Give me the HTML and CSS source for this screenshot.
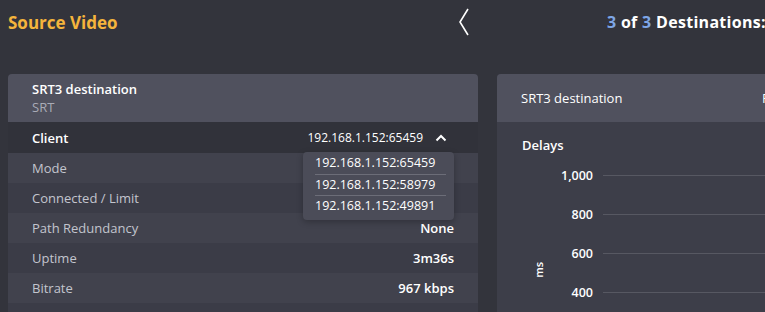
FILE: index.html
```html
<!DOCTYPE html>
<html lang="en">
<head>
  <meta charset="UTF-8" />
  <title>Source Video</title>
  <link rel="stylesheet" href="styles.css">
</head>
<body>
  <div class="topbar">
    <h1 class="title">Source Video</h1>
    <button class="back" aria-label="Back">
      <svg width="12" height="28" viewBox="0 0 12 28"><path d="M10 1 L2 14 L10 27" fill="none" stroke="#fff" stroke-width="1.6"/></svg>
    </button>
    <div class="dest-count"><span class="num">3</span> of <span class="num">3</span> Destinations:</div>
  </div>

  <div class="panels">
    <!-- Left: destination details -->
    <div class="panel details">
      <div class="panel-head">
        <div class="head-title">SRT3 destination</div>
        <div class="head-sub">SRT</div>
      </div>
      <div class="row client">
        <span class="label">Client</span>
        <span class="value">192.168.1.152:65459
          <svg class="caret" width="12" height="8" viewBox="0 0 12 8"><path d="M1.5 6.5 L6 2 L10.5 6.5" fill="none" stroke="#fff" stroke-width="2"/></svg>
        </span>
        <ul class="dropdown">
          <li>192.168.1.152:65459</li>
          <li>192.168.1.152:58979</li>
          <li>192.168.1.152:49891</li>
        </ul>
      </div>
      <div class="row odd"><span class="label">Mode</span><span class="value"></span></div>
      <div class="row even"><span class="label">Connected / Limit</span><span class="value"></span></div>
      <div class="row odd"><span class="label">Path Redundancy</span><span class="value">None</span></div>
      <div class="row even"><span class="label">Uptime</span><span class="value">3m36s</span></div>
      <div class="row odd"><span class="label">Bitrate</span><span class="value">967 kbps</span></div>
      <div class="row even"><span class="label"></span><span class="value"></span></div>
    </div>

    <!-- Right: delays chart -->
    <div class="panel stats">
      <div class="panel-head flat">
        <div class="head-name">SRT3 destination</div>
        <div class="head-name">Re</div>
      </div>
      <div class="chart-body">
        <div class="chart-title">Delays</div>
        <div class="chart">
          <div class="axis-name">ms</div>
          <div class="grid">
            <div class="tick"><span>1,000</span><i></i></div>
            <div class="tick"><span>800</span><i></i></div>
            <div class="tick"><span>600</span><i></i></div>
            <div class="tick"><span>400</span><i></i></div>
          </div>
        </div>
      </div>
    </div>
  </div>
</body>
</html>
```

FILE: styles.css
```css
:root {
  --bg: #33343c;
  --head: #50515e;
  --row-a: #41424d;
  --row-b: #3b3c47;
  --chart: #3d3e49;
  --pop: #4b4c58;
  --orange: #f5b43c;
  --blue: #7ea6e6;
  --muted: #c3c5ce;
}

html, body {
  height: 100%;
}

body {
  margin: 0;
  background: var(--bg);
  color: #fff;
  font-family: "Open Sans", "Liberation Sans", sans-serif;
  overflow: hidden;
}

.topbar {
  display: flex;
  align-items: center;
  height: 44px;
  padding: 0 8px;
}

.topbar > * { flex: none; }

.title {
  margin: 0;
  width: 440px;
  font-size: 17px;
  font-weight: 700;
  color: var(--orange);
}

.back {
  background: none;
  border: none;
  padding: 0;
  width: 20px;
  height: 30px;
  display: flex;
  align-items: center;
  justify-content: center;
  margin-left: 6px;
}

.dest-count {
  margin-left: 133px;
  font-size: 16px;
  font-weight: 700;
  letter-spacing: 0.3px;
  white-space: nowrap;
}

.dest-count .num { color: var(--blue); }

.panels {
  display: flex;
  gap: 19px;
  padding: 30px 0 0 8px;
}

.panel {
  flex: none;
}

.details { width: 470px; }
.stats { width: 300px; background: var(--chart); border-radius: 4px 0 0 0; }

.panel-head {
  background: var(--head);
  height: 48px;
  padding: 0 24px;
  display: flex;
  flex-direction: column;
  justify-content: center;
  border-radius: 4px 4px 0 0;
  box-sizing: border-box;
}

.head-title {
  font-size: 13px;
  font-weight: 600;
}

.head-sub {
  font-size: 13px;
  color: #a9abb6;
}

.panel-head.flat {
  flex-direction: row;
  align-items: center;
  justify-content: flex-start;
  padding-right: 0;
  border-radius: 4px 0 0 0;
}

.head-name {
  font-size: 13px;
  white-space: nowrap;
}

.head-name:first-child { width: 241px; }

.row {
  position: relative;
  display: flex;
  justify-content: space-between;
  align-items: center;
  height: 30px;
  padding: 0 24px;
  font-size: 13px;
}

.row .label { color: var(--muted); }
.row .value { font-weight: 600; }
.row.odd { background: var(--row-a); }
.row.even { background: var(--row-b); }

.row.client {
  background: #31323a;
  height: 31px;
}

.row.client .label {
  color: #fff;
  font-weight: 600;
}

.row.client .value {
  display: flex;
  align-items: center;
  gap: 12px;
  font-size: 12px;
  font-weight: 500;
  margin-right: 7px;
}

.dropdown {
  position: absolute;
  top: 30px;
  left: 295px;
  width: 151px;
  margin: 0;
  padding: 1px 8px 3px 12px;
  list-style: none;
  background: var(--pop);
  border-radius: 4px;
  box-sizing: border-box;
  box-shadow: 0 2px 6px rgba(0, 0, 0, 0.25);
  z-index: 2;
}

.dropdown li {
  height: 20.5px;
  line-height: 20px;
  font-size: 12.5px;
  border-bottom: 1px solid #6c6d78;
}

.dropdown li:last-child { border-bottom: none; }

.chart-body {
  padding: 14px 0 0 25px;
}

.chart-title {
  font-size: 13px;
  font-weight: 600;
}

.chart {
  display: flex;
  margin-top: 14px;
}

.axis-name {
  writing-mode: vertical-rl;
  transform: rotate(180deg);
  font-size: 11px;
  font-weight: 600;
  align-self: flex-start;
  margin-top: 94px;
  margin-left: 9px;
}

.grid {
  flex: 1;
  margin-left: 7px;
}

.tick {
  display: flex;
  align-items: center;
  height: 39px;
  margin-top: -12px;
  margin-bottom: 12px;
}

.tick span {
  width: 40px;
  text-align: right;
  font-size: 12.5px;
  font-weight: 600;
}

.tick i {
  flex: 1;
  height: 1px;
  margin-left: 10px;
  background: #575862;
}
```
